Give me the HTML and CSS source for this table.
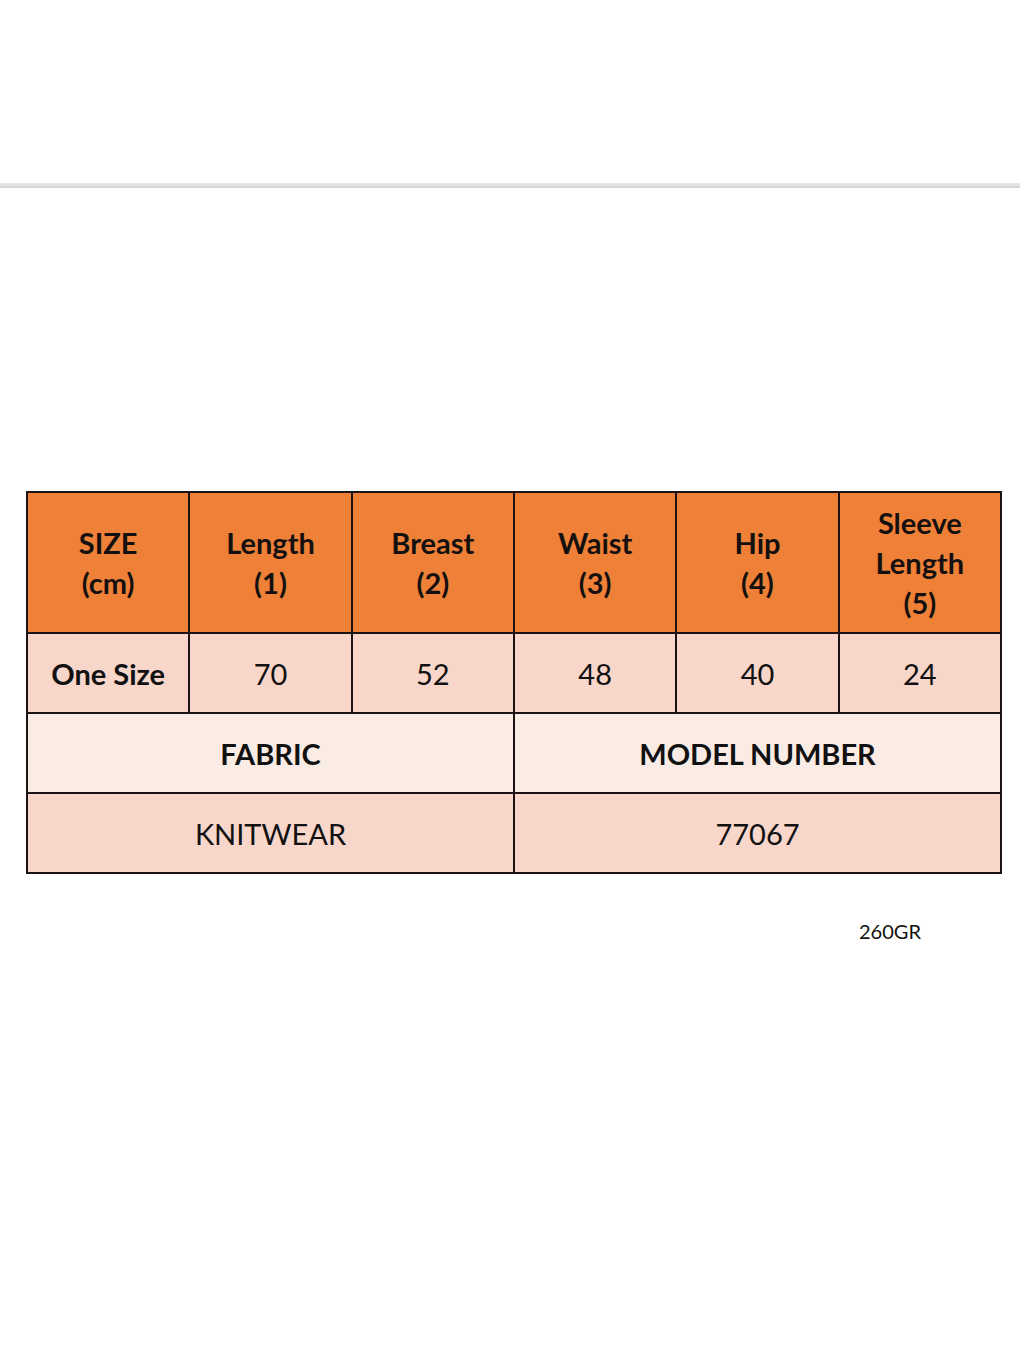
FILE: index.html
```html
<!DOCTYPE html>
<html>
<head>
<meta charset="utf-8">
<link rel="stylesheet" href="styles.css">
</head>
<body>
<div class="page">
  <div class="topbar"></div>
  <div class="rule"></div>
  <div class="content">
    <table class="sizes">
      <colgroup>
        <col class="c"><col class="c"><col class="c"><col class="c"><col class="c"><col class="c">
      </colgroup>
      <tr class="head">
        <th>SIZE<br>(cm)</th>
        <th>Length<br>(1)</th>
        <th>Breast<br>(2)</th>
        <th>Waist<br>(3)</th>
        <th>Hip<br>(4)</th>
        <th>Sleeve<br>Length<br>(5)</th>
      </tr>
      <tr class="vals">
        <td class="bold">One Size</td>
        <td>70</td>
        <td>52</td>
        <td>48</td>
        <td>40</td>
        <td>24</td>
      </tr>
      <tr class="labels">
        <td colspan="3" class="bold">FABRIC</td>
        <td colspan="3" class="bold">MODEL NUMBER</td>
      </tr>
      <tr class="vals">
        <td colspan="3">KNITWEAR</td>
        <td colspan="3">77067</td>
      </tr>
    </table>
    <div class="weight">260GR</div>
  </div>
</div>
</body>
</html>
```

FILE: styles.css
```css
html, body {
  margin: 0;
  padding: 0;
  background: #ffffff;
}
body {
  font-family: "Lato", "Open Sans", "Liberation Sans", sans-serif;
  color: #111111;
}
.page {
  width: 1020px;
}
.topbar {
  height: 183px;
}
.rule {
  height: 5px;
  background: linear-gradient(#e6e6e6, #e0e0e0 60%, #cfcfcf);
}
.content {
  padding: 303px 18px 0 26px;
}
.sizes {
  border-collapse: collapse;
  width: 976px;
  table-layout: fixed;
  border: 2px solid #1c1414;
}
.sizes th, .sizes td {
  border: 2px solid #1c1414;
  text-align: center;
  vertical-align: middle;
  padding: 0;
}
.head th {
  background: #ee8037;
  height: 139px;
  font-size: 29px;
  line-height: 40px;
  font-weight: 700;
  color: #141010;
}
.vals td {
  background: #f8d6ca;
  height: 78px;
  font-size: 29px;
  font-weight: 400;
}
.labels td {
  background: #fbebe5;
  height: 78px;
  font-size: 29px;
}
.sizes td.bold {
  font-weight: 700;
}
.weight {
  margin-top: 45px;
  padding-left: 833px;
  font-size: 20px;
  line-height: 24px;
  color: #111;
}
```
